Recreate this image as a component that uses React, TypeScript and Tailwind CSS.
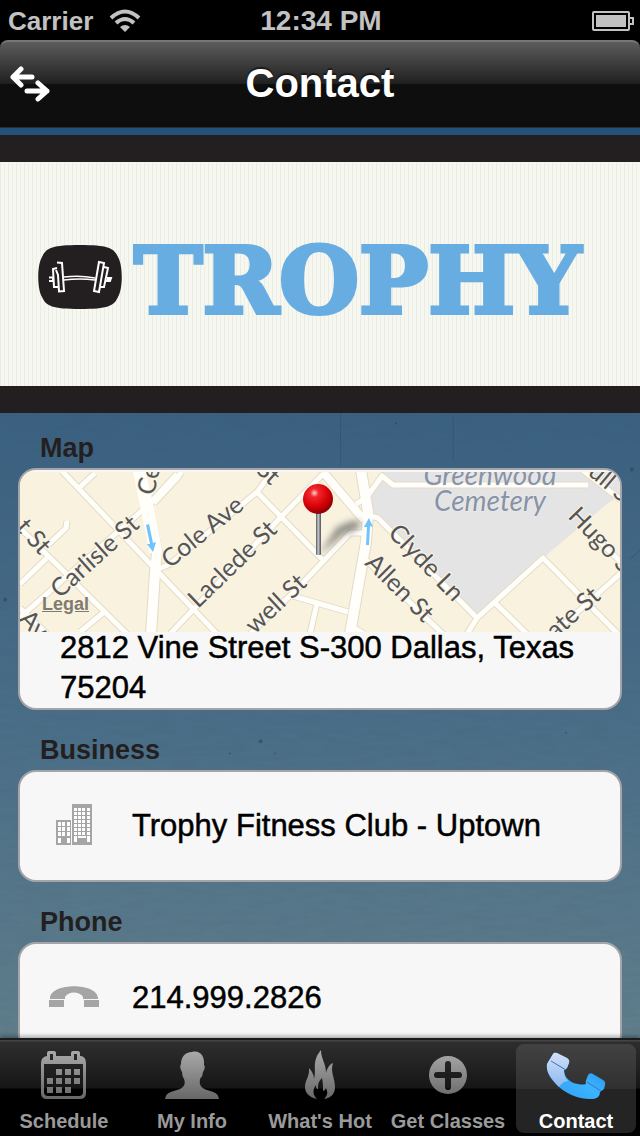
import { useState, type ReactNode } from 'react';

const STREETS = [
    'M42 -1 L197 162',
    'M75 1 L58 17',
    'M162 0 L133 29 L-3 148',
    'M47 49 L46 56 L28 73',
    'M0 112 L27 86',
    'M0 56 L107 162',
    'M60 160 L83 141',
    'M0 136 L27 162',
    'M134 99 L150 92 L237 20 L252 0',
    'M237 20 L302 87',
    'M303 2 L262 44 L150 162',
    'M342 61 L330 61 L277 117 L230 162',
    'M336 32 L346 26 L362 4 L373 13 L568 13',
    'M350 44 L358 46 L457 146',
    'M447 162 L457 146 L523 86 L598 162',
    'M475 131 L507 162',
    'M601 101 L533 162',
    'M560 -4 L601 28',
    'M580 70 L601 90',
    'M273 124 L328 140',
    'M297 131 L290 162',
    'M346 88 L425 164',
    'M331 154 L344 162',
];

const AVENUES = ['M158 3 L133 30', 'M303 0 L344 48'];

const MAIN_ROADS = [
    'M120 -3 L127 35 L137 80 L135 100 L131 162',
    'M341 -2 L348 40 L346 70 L330 162',
];

const LABELS: { text: string; x: number; y: number; angle: number; end?: boolean }[] = [
    { text: 'Ce', x: 134, y: 24, angle: -78 },
    { text: 't St', x: 20, y: 84, angle: 48, end: true },
    { text: 'Carlisle St', x: 40, y: 127, angle: -42 },
    { text: 'Cole Ave', x: 150, y: 97, angle: -39 },
    { text: 'Laclede St', x: 178, y: 137, angle: -44 },
    { text: 'St', x: 251, y: 14, angle: 42, end: true },
    { text: 'well St', x: 288, y: 113, angle: -43, end: true },
    { text: 'Clyde Ln', x: 367, y: 62, angle: 46 },
    { text: 'Allen St', x: 344, y: 92, angle: 45 },
    { text: 'ull St', x: 567, y: 2, angle: 40 },
    { text: 'Hugo St', x: 547, y: 45, angle: 46 },
    { text: 'ate St', x: 582, y: 126, angle: -42, end: true },
    { text: 'Ave', x: -2, y: 148, angle: 46 },
];

function StreetMap() {
    return (
        <svg viewBox="0 0 600 160" preserveAspectRatio="xMidYMid slice" className="block h-40 w-full" aria-label="Street map">
            <defs>
                <radialGradient id="pinHead" cx="0.38" cy="0.3" r="0.7">
                    <stop offset="0" stopColor="#ffd0d0" />
                    <stop offset="0.2" stopColor="#f0282c" />
                    <stop offset="0.65" stopColor="#d90006" />
                    <stop offset="1" stopColor="#8d0004" />
                </radialGradient>
                <linearGradient id="pinNeedle">
                    <stop offset="0" stopColor="#55585c" />
                    <stop offset="0.45" stopColor="#c5c8cc" />
                    <stop offset="1" stopColor="#4c4e52" />
                </linearGradient>
                <filter id="soft" x="-50%" y="-50%" width="200%" height="200%">
                    <feGaussianBlur stdDeviation="3" />
                </filter>
            </defs>
            <rect width="600" height="160" fill="#f8f2df" />
            <path d="M350 22 L362 4 L362 -2 H602 V22 L587 32 L523 86 L457 146 L352 44 Z" fill="#e5e4e4" />

            <g fill="none" stroke="#e3dcc5" strokeLinejoin="round">
                {STREETS.map((d) => <path key={d} d={d} strokeWidth="7" />)}
                {AVENUES.map((d) => <path key={d} d={d} strokeWidth="10" />)}
                {MAIN_ROADS.map((d) => <path key={d} d={d} strokeWidth="12" />)}
            </g>
            <g fill="none" stroke="#fffefb" strokeLinejoin="round">
                {STREETS.map((d) => <path key={d} d={d} strokeWidth="5" />)}
                {AVENUES.map((d) => <path key={d} d={d} strokeWidth="8" />)}
                {MAIN_ROADS.map((d) => <path key={d} d={d} strokeWidth="10" />)}
                <path d="M119 -3 L127 35 L136 80" strokeWidth="13" />
            </g>

            {/* one-way arrows */}
            <g fill="#70c3fb">
                <path d="M126 53 L129 52 L133 71 L136 70 L133 80 L127 72 L130 72 Z" />
                <path d="M346 73 L349 73 L350 54 L353 55 L349 46 L344 55 L347 55 Z" />
            </g>

            <g className="font-['Lato',sans-serif] text-[25px]" fill="#555557" stroke="#fbf5e6" strokeWidth="2" paintOrder="stroke">
                {LABELS.map((l) => (
                    <text key={l.text + l.x} textAnchor={l.end ? 'end' : 'start'} transform={`translate(${l.x} ${l.y}) rotate(${l.angle})`}>
                        {l.text}
                    </text>
                ))}
            </g>
            <g className="font-['Lato',sans-serif] text-[28px] italic" fill="#8793a6" stroke="#f0efef" strokeWidth="1" paintOrder="stroke" textAnchor="middle">
                <text x="470" y="13">Greenwood</text>
                <text x="470" y="39">Cemetery</text>
            </g>

            <path d="M299 83 L316 56 Q334 45 340 50 Q342 58 324 62 Z" fill="#555" opacity="0.6" filter="url(#soft)" />
            <rect x="296" y="40" width="5" height="43" rx="1" fill="url(#pinNeedle)" />
            <circle cx="298" cy="27" r="15" fill="url(#pinHead)" />
        </svg>
    );
}

// faint scratches and specks of the worn wall behind the cards
function WallTexture() {
    return (
        <svg viewBox="0 0 640 625" preserveAspectRatio="xMidYMin slice" className="pointer-events-none absolute inset-0 h-full w-full">
            <defs>
                <filter id="grain" x="0" y="0" width="100%" height="100%">
                    <feTurbulence type="fractalNoise" baseFrequency="0.04 0.2" numOctaves="3" seed="4" />
                    <feColorMatrix values="0 0 0 0 0.05  0 0 0 0 0.1  0 0 0 0 0.16  0.5 0 0 0 -0.18" />
                </filter>
            </defs>
            <rect width="640" height="625" filter="url(#grain)" opacity="0.5" />
            <g fill="#1c3c5c" opacity="0.45">
                <circle cx="232" cy="332" r="1" />
                <circle cx="262" cy="320" r="2" />
                <circle cx="276" cy="332" r="1" />
                <circle cx="624" cy="55" r="2" />
                <circle cx="13" cy="182" r="2" />
                <circle cx="394" cy="10" r="1" />
                <circle cx="560" cy="312" r="1" />
            </g>
            <path d="M340 0 V52 M450 4 V46 M623 142 L640 126 M6 470 V560" stroke="#1c3c5c" strokeWidth="1" opacity="0.25" />
        </svg>
    );
}

function SwapIcon() {
    return (
        <svg viewBox="0 0 40 38" className="h-[38px] w-10" fill="none" stroke="#fff" strokeWidth="5" strokeLinecap="round" strokeLinejoin="round">
            <path d="M11 3 L3 11 L11 19 M3 11 H22" />
            <path d="M28 17 L37 25 L28 33 M37 25 H17" />
        </svg>
    );
}

function WifiIcon() {
    return (
        <svg viewBox="0 0 32 24" className="h-6 w-8" fill="none" stroke="#c2c2c2">
            <path d="M2 9 Q16 -4 30 9" strokeWidth="4" />
            <path d="M7 14 Q16 6 25 14" strokeWidth="4" />
            <path d="M11 18 Q16 14 21 18 L16 23 Z" fill="#c2c2c2" stroke="none" />
        </svg>
    );
}

function BatteryIcon() {
    return (
        <svg viewBox="0 0 42 20" className="h-5 w-[42px]" fill="none" stroke="#c2c2c2" strokeWidth="2">
            <rect x="1" y="1" width="36" height="18" rx="1" />
            <rect x="4" y="4" width="30" height="12" fill="#c2c2c2" stroke="none" />
            <path d="M37 7 H41 V13 H37" />
        </svg>
    );
}

function DumbbellBadge() {
    return (
        <svg viewBox="0 0 84 64" className="h-16 w-[84px] shrink-0">
            <path d="M42 0 C70 0 76 3 80 12 C85 20 85 44 80 52 C76 61 70 64 42 64 C14 64 8 61 4 52 C-1 44 -1 20 4 12 C8 3 14 0 42 0 Z" fill="#231f20" />
            <g fill="none" stroke="#fff" strokeWidth="2">
                <path d="M11 32.5 H15 V36 H11 M19 23 L15 24 L16 42 L20 42 M19 17.500 L24 18 L26 46 L21 46.500 L20 30 L18 25" />
                <path d="M26 32 Q42 30 57 33 M26 35 Q42 33 57 35" strokeWidth="1.400" />
                <path d="M61 17 L66 18 L61 47 L56 46 Z M66 22 L70 23 L66 42 L62 42" />
                <path d="M69 33 L73 33 L72 36 L68 36" fill="#fff" />
            </g>
        </svg>
    );
}

function BuildingsIcon() {
    return (
        <svg viewBox="0 0 36 41" className="h-[41px] w-9">
            <path d="M0 16 H15 V41 H0 Z M16 0 H36 V41 H16 Z" fill="#a5a5a5" />
            <g fill="#fff">
                {[19, 24, 29].map((y) => [2, 6, 11].map((x) => <rect key={`${x}-${y}`} x={x} y={y - 1} width="3" height="4" />))}
                <rect x="2" y="34" width="3" height="5" />
                <rect x="11" y="34" width="3" height="5" />
                {[4, 8, 12, 16, 20, 24, 28].map((y) => [18, 22, 26, 31].map((x) => <rect key={`${x}-${y}`} x={x} y={y} width="3" height="3" />))}
                <path d="M18 32 H21 V38 H18 Z M22 32 H30 V34 H22 Z M31 32 H34 V38 H31 Z" />
            </g>
        </svg>
    );
}

function HandsetIcon() {
    return (
        <svg viewBox="0 0 50 21" className="h-[21px] w-[50px]" fill="#a5a5a5">
            <path d="M1 13 C0 -4 50 -4 49 13 L34 13 L34 11 C31 5 19 5 16 11 L16 13 Z" />
            <path d="M0 14 H15 V21 H0 Z M35 14 H50 V21 H35 Z" />
        </svg>
    );
}

function TabGradient() {
    return (
        <svg className="absolute h-0 w-0">
            <defs>
                <linearGradient id="tabFill" x1="0" y1="0" x2="0" y2="50" gradientUnits="userSpaceOnUse">
                    <stop offset="0" stopColor="#ababab" />
                    <stop offset="1" stopColor="#666" />
                </linearGradient>
            </defs>
        </svg>
    );
}

function CalendarIcon() {
    return (
        <svg viewBox="0 0 46 50" className="h-[50px] w-[46px]" fill="url(#tabFill)">
            <path
                fillRule="evenodd"
                d="M6 6 V3 Q6 1 8 1 H13 Q15 1 15 3 V6 H30 V3 Q30 1 32 1 H37 Q39 1 39 3 V6 H40 Q45 7 45 13 V43 Q45 49 39 49 H6 Q0 49 0 43 V13 Q0 7 6 6 Z M9 4 V10 H12 V4 Z M33 4 V10 H36 V4 Z M3 14 V42 Q3 46 7 46 H38 Q42 46 42 42 V14 Z"
            />
            {[[15, 19], [24, 19], [33, 19], [6, 28], [15, 28], [24, 28], [33, 28], [6, 37], [15, 37], [24, 37]].map(([x, y]) => (
                <rect key={`${x}-${y}`} x={x} y={y} width="6" height="6" />
            ))}
        </svg>
    );
}

function PersonIcon() {
    return (
        <svg viewBox="0 0 54 50" className="h-[50px] w-[54px]" fill="url(#tabFill)">
            <path d="M27 2 C34 0 40 5 39 15 Q41 17 38 22 Q38 26 35 29 C34 35 36 38 42 40 C49 42 53 43 54 49 H0 C1 43 5 42 12 40 C19 38 21 34 19 29 Q17 26 17 22 Q14 17 16 14 C16 7 20 2 27 2 Z" />
        </svg>
    );
}

function FlameIcon() {
    return (
        <svg viewBox="0 0 32 50" className="h-[50px] w-8" fill="url(#tabFill)">
            <path d="M17 0 C17 9 22 13 22 23 C23 18 26 14 29 13 C26 22 31 28 31 37 C31 44 27 48 20 49 C25 44 23 41 22 38 C21 40 20 41 19 41 C19 36 19 33 18 28 C14 32 14 35 14 39 C12 39 12 37 12 35 C9 39 8 44 13 49 C5 47 1 43 1 37 C1 30 6 26 5 18 C8 21 10 25 10 29 C13 20 7 12 17 0 Z" />
        </svg>
    );
}

function PlusIcon() {
    return (
        <svg viewBox="0 0 40 50" className="h-[50px] w-10" fill="url(#tabFill)">
            <path
                fillRule="evenodd"
                d="M20 6 A19 19 0 1 0 20 44 A19 19 0 1 0 20 6 Z M20 11 Q23 11 23 14 V22 H31 Q34 22 34 25 Q34 28 31 28 H23 V37 Q23 40 20 40 Q17 40 17 37 V28 H9 Q6 28 6 25 Q6 22 9 22 H17 V14 Q17 11 20 11 Z"
            />
        </svg>
    );
}

function CallIcon() {
    return (
        <svg viewBox="0 0 60 50" className="h-[50px] w-[60px]">
            <defs>
                <linearGradient id="callFill" x1="0" y1="1" x2="1" y2="0">
                    <stop offset="0" stopColor="#2f9cf0" />
                    <stop offset="0.5" stopColor="#3bb4ff" />
                    <stop offset="1" stopColor="#1f7be0" />
                </linearGradient>
                <linearGradient id="callShine" x1="0" y1="0" x2="0" y2="1">
                    <stop offset="0" stopColor="#d2e1f8" />
                    <stop offset="1" stopColor="#8db8ee" />
                </linearGradient>
            </defs>
            <path d="M7 4 Q8 2 11 3 L21 8 Q24 10 23 13 L21 18 Q19 20 18 20 C18 27 24 33 32 34 Q36 35 40 34 Q39 32 41 28 L42 25 Q44 22 47 24 L57 30 Q60 32 59 35 L58 39 L54 42 Q54 48 47 49 C34 50 19 44 10 34 C3 27 0 21 1 14 Z" fill="url(#callFill)" />
            <path d="M7 4 Q8 2 11 3 L21 8 Q24 10 23 13 L21 18 Q19 20 18 20 C18 25 19 28 22 31 Q17 31 13 37 C4 28 0 21 1 14 Z" fill="url(#callShine)" />
            <path d="M5 11 L20 20 M41 32 L55 41" stroke="#3c74c4" strokeWidth="1" />
        </svg>
    );
}

const TABS: { label: string; icon: ReactNode }[] = [
    { label: 'Schedule', icon: <CalendarIcon /> },
    { label: 'My Info', icon: <PersonIcon /> },
    { label: "What's Hot", icon: <FlameIcon /> },
    { label: 'Get Classes', icon: <PlusIcon /> },
    { label: 'Contact', icon: <CallIcon /> },
];

function Section({ title, children }: { title: string; children: ReactNode }) {
    return (
        <section>
            <h2 className="pl-[22px] text-[27px] leading-10 font-bold text-[#231f20]">{title}</h2>
            <div className="overflow-hidden rounded-[18px] border-2 border-[#a5a5a9] bg-[#f7f7f7] text-[31px] leading-10 text-black [-webkit-text-stroke:0.5px_#000]">
                {children}
            </div>
        </section>
    );
}

function InfoRow({ icon, children }: { icon: ReactNode; children: ReactNode }) {
    return (
        <div className="flex h-[108px] items-center gap-3 pl-2">
            <div className="flex w-[92px] justify-center pb-1">{icon}</div>
            {children}
        </div>
    );
}

export default function App() {
    const [active, setActive] = useState('Contact');

    return (
        <div className="flex h-screen flex-col bg-black font-['Liberation_Sans',Arial,sans-serif]">
            <div className="grid h-10 shrink-0 grid-cols-3 items-center pr-[6px] pb-[2px] pl-2 font-bold text-[#c2c2c2]">
                <div className="flex items-center gap-4 text-[26px]">
                    Carrier
                    <WifiIcon />
                </div>
                <div className="text-center text-[28px]">12:34 PM</div>
                <div className="flex justify-end">
                    <BatteryIcon />
                </div>
            </div>

            <header className="grid h-[88px] shrink-0 grid-cols-[1fr_auto_1fr] items-center rounded-t-lg border-t-2 border-b border-t-[#777] border-b-[#2c2c2c] bg-[linear-gradient(#5c5c5c,#202020_49%,#0e0e0e_50%,#0e0e0e)] px-[10px]">
                <button type="button" aria-label="Switch location" className="w-10">
                    <SwapIcon />
                </button>
                <h1 className="pb-1 text-[40px] leading-none font-bold text-white [text-shadow:0_-2px_1px_#00000080]">Contact</h1>
            </header>

            <main className="min-h-0 flex-1 overflow-hidden bg-[linear-gradient(#24527b,#3a6080_30%,#4b6f88_68%,#607e8b)] pt-[7px]">
                <div className="border-y-[27px] border-[#231f20] bg-[#f6f7f1] bg-[repeating-linear-gradient(90deg,#e9ece2_0_1px,#f6f7f1_1px_4px,#eef0e8_4px_5px,#f6f7f1_5px_8px)]">
                    <div className="flex h-[224px] items-center gap-3 px-[38px] pt-[6px]">
                        <DumbbellBadge />
                        <span className="pt-2 font-['DejaVu_Serif',serif] text-[92px] leading-none font-bold text-[#68ade1] [-webkit-text-stroke:4px_#68ade1]">TROPHY</span>
                    </div>
                </div>

                <div className="relative">
                    <WallTexture />
                    <div className="relative flex flex-col gap-5 px-[18px] pt-[15px]">
                        <Section title="Map">
                            <div className="relative pt-[2px]">
                                <StreetMap />
                                <a href="#legal" className="absolute bottom-4 left-[22px] text-[18px] leading-6 font-bold text-[#7f7a70] underline [-webkit-text-stroke:0px]">
                                    Legal
                                </a>
                            </div>
                            <p className="relative -mt-1 px-10">2812 Vine Street S-300 Dallas, Texas 75204</p>
                        </Section>
                        <Section title="Business">
                            <InfoRow icon={<BuildingsIcon />}>Trophy Fitness Club - Uptown</InfoRow>
                        </Section>
                        <Section title="Phone">
                            <InfoRow icon={<HandsetIcon />}>214.999.2826</InfoRow>
                        </Section>
                    </div>
                </div>
            </main>

            <nav className="relative grid h-[98px] shrink-0 grid-cols-5 border-t-2 border-[#1b1b1b] bg-[linear-gradient(#444_0_1px,#2e2e2e_2px,#161616_48px,#000_49px)] shadow-[0_-2px_4px_#00000050]">
                <TabGradient />
                {TABS.map((tab) => {
                    const selected = tab.label === active;
                    return (
                        <button
                            key={tab.label}
                            type="button"
                            aria-current={selected ? 'page' : undefined}
                            onClick={() => setActive(tab.label)}
                            className={
                                'mx-1 my-1 flex flex-col items-center rounded-lg pt-[6px] text-[20px] leading-6 font-bold whitespace-nowrap ' +
                                (selected ? 'bg-[linear-gradient(#424242,#303030_50%,#242424_51%,#242424)] text-white' : 'text-[#9a9a9a]')
                            }
                        >
                            {tab.icon}
                            <span className="mt-[9px]">{tab.label}</span>
                        </button>
                    );
                })}
            </nav>
        </div>
    );
}
